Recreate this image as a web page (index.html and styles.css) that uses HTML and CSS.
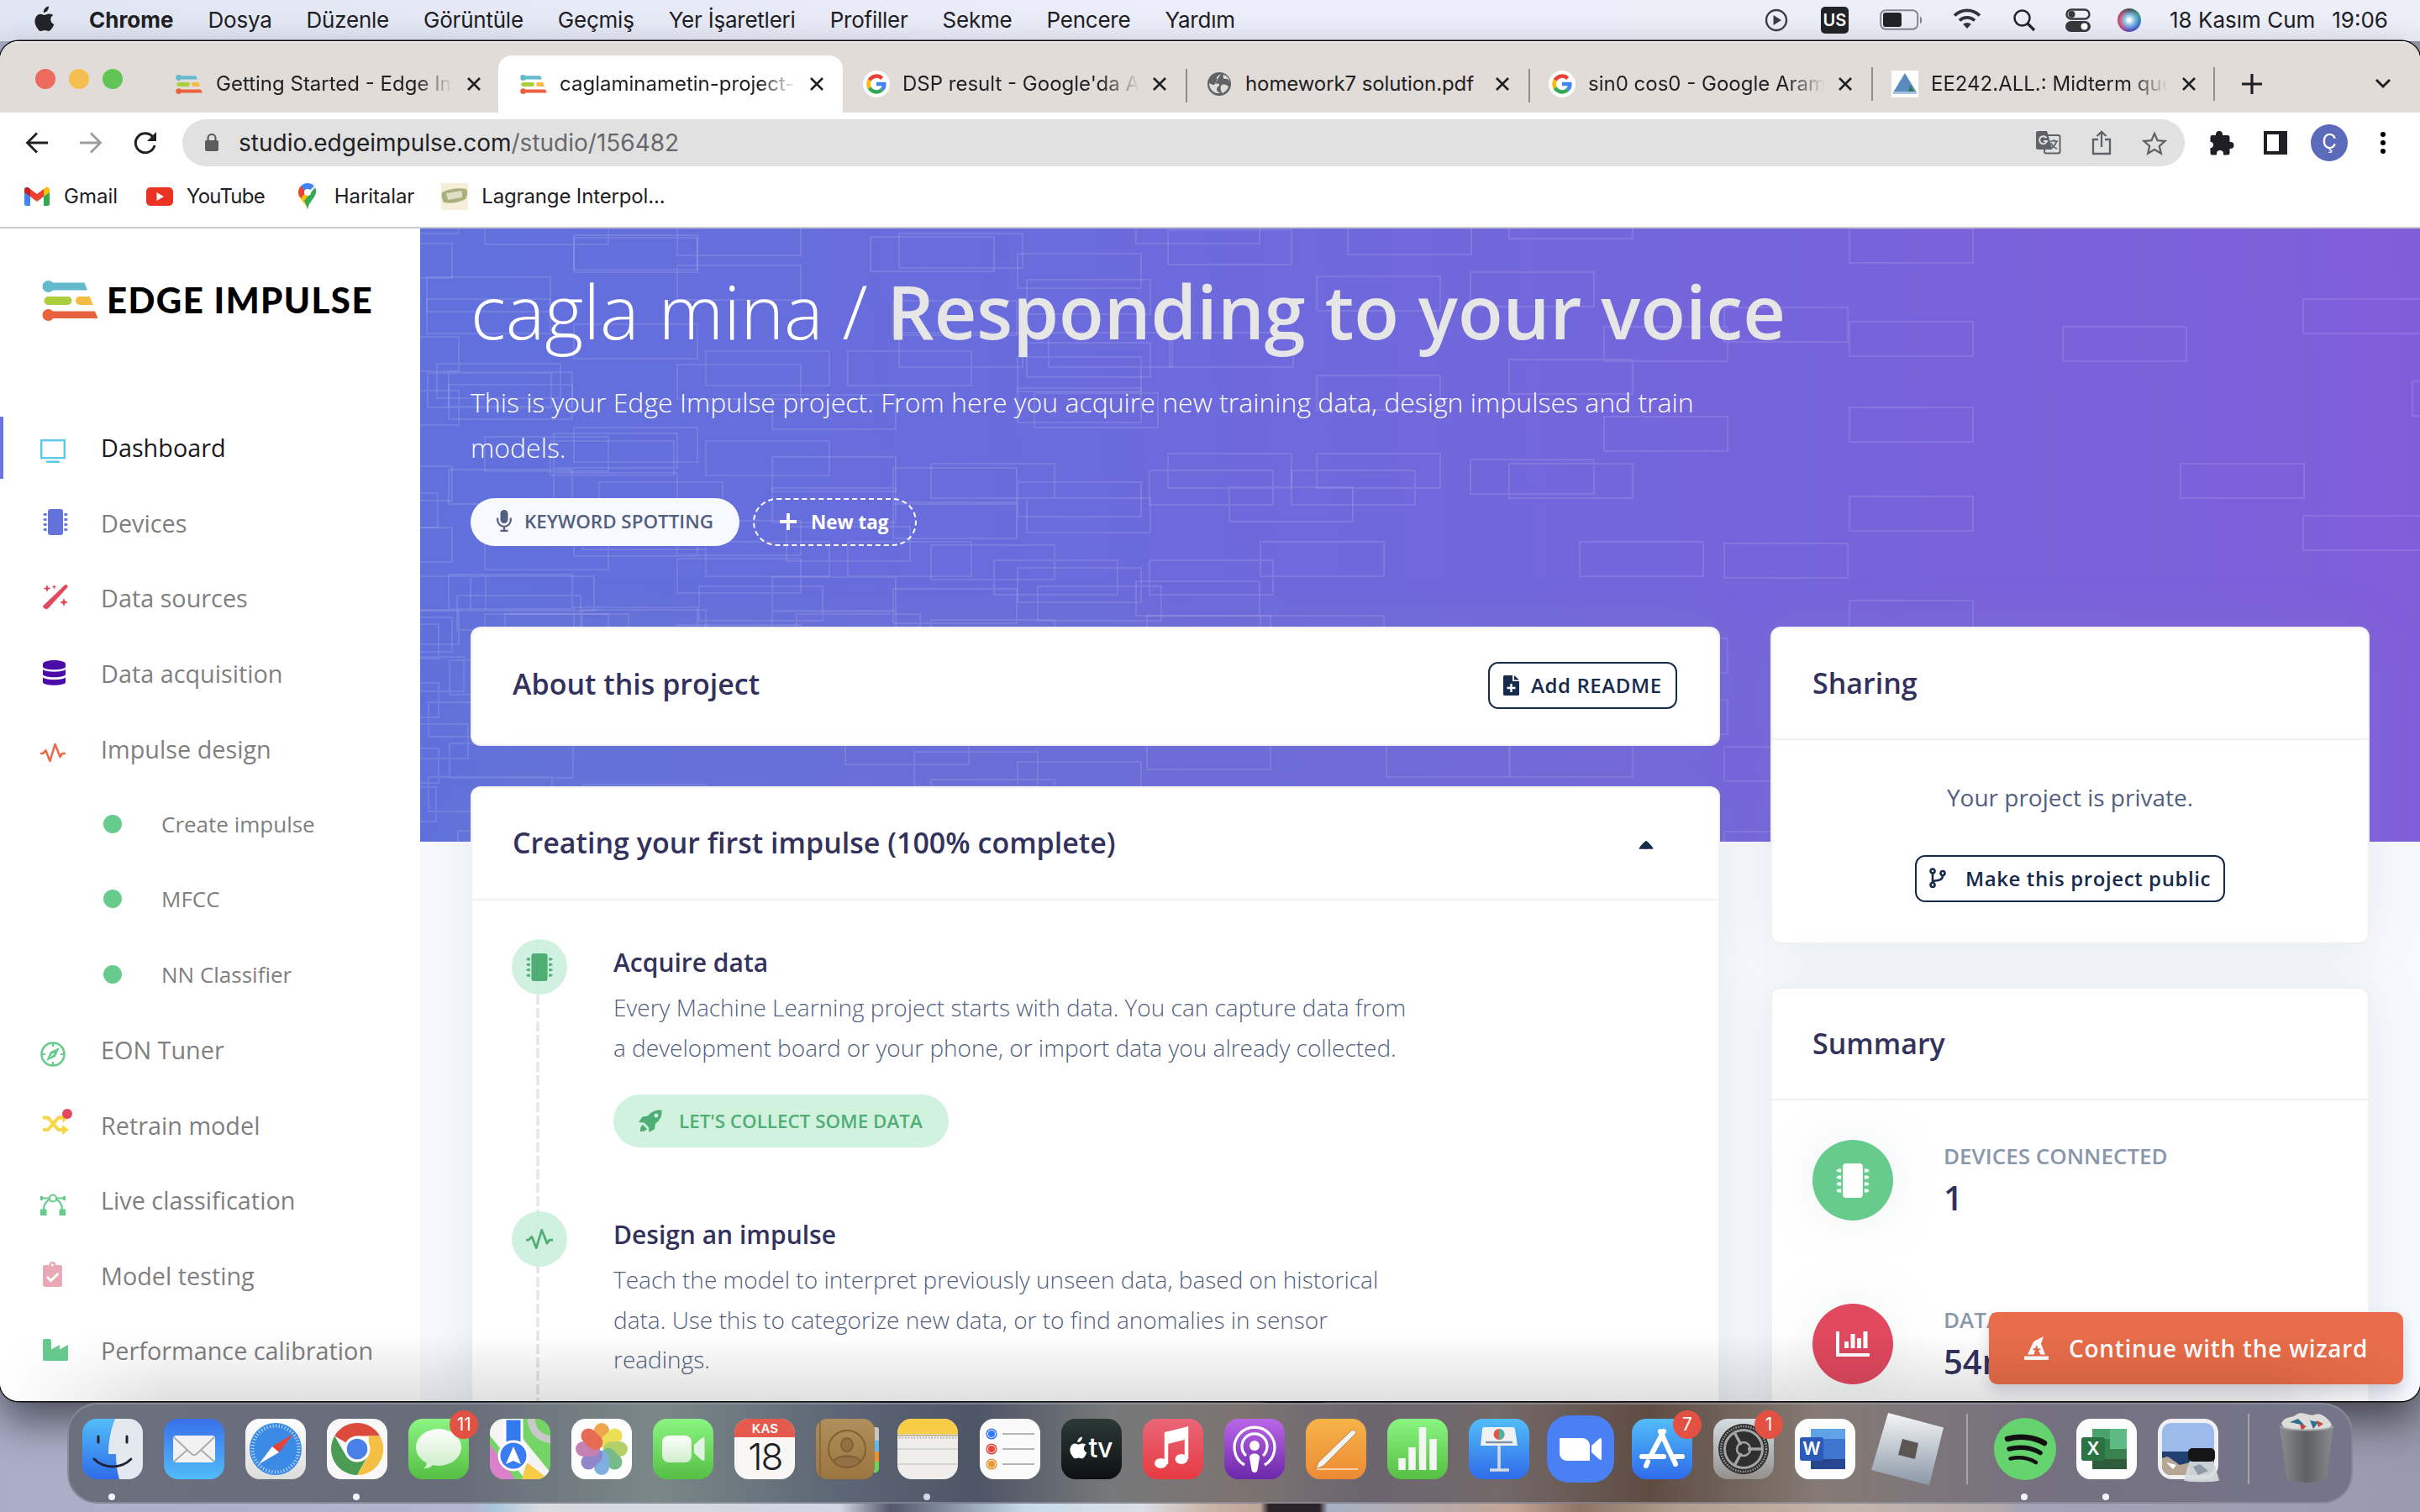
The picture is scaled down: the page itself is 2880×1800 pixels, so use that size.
FILE: index.html
```html
<!DOCTYPE html>
<html lang="tr">
<head>
<meta charset="utf-8">
<title>Edge Impulse – Dashboard</title>
<link rel="stylesheet" href="styles.css">
</head>
<body>
<svg class="defs" width="0" height="0">
  <defs>
    <symbol id="apple" viewBox="0 0 26 32"><path d="M18 .5c.2 2-.6 3.800-1.700 5.200S13.400 8 11.700 7.900c-.2-1.900.7-3.800 1.800-5S16.500.7 18 .5zM23.300 11c-1.900 1.200-3 2.900-3 5.200 0 2.700 1.600 4.800 4 5.700-.6 1.800-1.600 3.700-2.700 5.200-1.100 1.500-2.200 3-4 3-1.700 0-2.300-1-4.400-1s-2.800 1-4.400 1c-1.700.1-3-1.600-4.100-3.200C2 23.500.2 18.400 2.500 13.700c1.200-2.500 3.400-4 5.800-4 1.800 0 3.500 1.200 4.600 1.200s3.200-1.500 5.400-1.300c.9 0 3.500.4 5 1.400z"/></symbol>
    <symbol id="edge" viewBox="0 0 67 48"><circle cx="7.500" cy="7" r="7" fill="#62bacc"/><path d="M8 2.500h42.500L54 11.500H8z" fill="#62bacc"/><rect x="2.500" y="19" width="33" height="10" rx="5" fill="#abcf3c"/><path d="M45 19h12l3.500 10H45a5 5 0 0 1 0-10z" fill="#f5bb41"/><circle cx="7.500" cy="41" r="7" fill="#e9613d"/><path d="M8 36.500h55L66.500 45H8z" fill="#e9613d"/></symbol>
    <symbol id="close" viewBox="0 0 16 16"><path d="M1 1l14 14M15 1L1 15" stroke="#1f2023" stroke-width="2.600"/></symbol>
    <symbol id="google" viewBox="0 0 32 32"><circle cx="16" cy="16" r="16" fill="#fff"/><g fill="none" stroke-width="4.600"><path d="M7.700 11.500A9.500 9.500 0 0 1 22.700 9.300" stroke="#ea4335"/><path d="M7.700 20.500a9.500 9.500 0 0 1 0-9" stroke="#fbbc05"/><path d="M22.500 22.900A9.500 9.500 0 0 1 7.700 20.500" stroke="#34a853"/><path d="M16 16h9.300c.2 3-1 5.300-2.800 6.900" stroke="#4285f4"/></g></symbol>
    <symbol id="chip" viewBox="0 0 30 31"><rect x="6" y="0" width="18" height="31" rx="3"/><path d="M0 6.500l2-1.500h2.500v3H2zm0 6l2-1.500h2.500v3H2zm0 6L2 17h2.500v3H2zm0 6L2 23h2.500v3H2zM30 6.500L28 5h-2.500v3H28zm0 6L28 11h-2.500v3H28zm0 6L28 17h-2.500v3H28zm0 6L28 23h-2.500v3H28z"/></symbol>
    <symbol id="pulse" viewBox="0 0 30 24"><path d="M0 13h3l3.500-3.500L11.500 22 17.500 2l6 15 2.500-4h4" fill="none" stroke="currentColor" stroke-width="2.600" stroke-linejoin="round"/></symbol>
    <symbol id="box" viewBox="0 0 72 72"><rect width="72" height="72" rx="17"/></symbol>
    <linearGradient id="gSky" x2="0" y2="1"><stop stop-color="#52bdf8"/><stop offset="1" stop-color="#2f6bea"/></linearGradient>
    <linearGradient id="gMail" x2="0" y2="1"><stop stop-color="#3a70ea"/><stop offset="1" stop-color="#52bdf9"/></linearGradient>
    <linearGradient id="gGreen" x2="0" y2="1"><stop stop-color="#8af582"/><stop offset="1" stop-color="#56bf44"/></linearGradient>
    <linearGradient id="gWhite" x2="0" y2="1"><stop stop-color="#fff"/><stop offset="1" stop-color="#dcdcdc"/></linearGradient>
    <linearGradient id="gRed" x2="0" y2="1"><stop stop-color="#ea6678"/><stop offset="1" stop-color="#e73b42"/></linearGradient>
    <linearGradient id="gPurple" x2="0" y2="1"><stop stop-color="#bb66e8"/><stop offset="1" stop-color="#6c27aa"/></linearGradient>
    <linearGradient id="gOrange" x2="0" y2="1"><stop stop-color="#f5b448"/><stop offset="1" stop-color="#ee8a35"/></linearGradient>
    <linearGradient id="gTv" x2="0" y2="1"><stop stop-color="#2c3a36"/><stop offset="1" stop-color="#0d1012"/></linearGradient>
    <linearGradient id="gBrown" x2="0" y2="1"><stop stop-color="#b08e5b"/><stop offset="1" stop-color="#9c763f"/></linearGradient>
    <linearGradient id="gSteel" x2="0" y2="1"><stop stop-color="#f4f5f7"/><stop offset="1" stop-color="#8b98a6"/></linearGradient>
    <linearGradient id="gGear" x2="0" y2="1"><stop stop-color="#d4dde2"/><stop offset="1" stop-color="#94918e"/></linearGradient>
    <linearGradient id="gBubble" x2="0" y2="1"><stop stop-color="#fff"/><stop offset="1" stop-color="#cfeeca"/></linearGradient>
    <linearGradient id="gBin" x2="1" y2="0"><stop stop-color="#8b8d8e"/><stop offset=".5" stop-color="#5c6062"/><stop offset="1" stop-color="#8a8c8d"/></linearGradient>
  </defs>
</svg>

<header class="menubar">
  <svg class="apple" width="26" height="32" fill="#232427"><use href="#apple"/></svg>
  <nav class="menus">
    <b>Chrome</b><span>Dosya</span><span>Düzenle</span><span>Görüntüle</span><span>Geçmiş</span><span>Yer İşaretleri</span><span>Profiller</span><span>Sekme</span><span>Pencere</span><span>Yardım</span>
  </nav>
  <div class="status">
    <svg width="28" height="28" viewBox="0 0 28 28"><circle cx="14" cy="14" r="12" fill="none" stroke="#3c3d42" stroke-width="2.400"/><path d="M10.500 8v12L20 14z" fill="#3c3d42"/></svg>
    <span class="lang">US</span>
    <svg class="s-bat" width="52" height="26" viewBox="0 0 52 26"><rect x="1.200" y="1.200" width="44" height="22.600" rx="6" fill="none" stroke="#85878c" stroke-width="2"/><rect x="4" y="4" width="22" height="17" rx="3" fill="#222327"/><path d="M48 8.500c3 1.500 3 7 0 9z" fill="#85878c"/></svg>
    <svg class="s-wifi" width="34" height="26" viewBox="0 0 34 26"><g fill="none" stroke="#333438" stroke-width="3.800"><path d="M2 9.500a21.500 21.500 0 0 1 30 0"/><path d="M8 15.500a13 13 0 0 1 18 0"/></g><path d="M17 25l-4.800-5.200a7 7 0 0 1 9.600 0z" fill="#333438"/></svg>
    <svg class="s-find" width="28" height="28" viewBox="0 0 28 28"><circle cx="11.500" cy="11.500" r="9" fill="none" stroke="#222327" stroke-width="2.500"/><path d="M18 18l8 8" stroke="#222327" stroke-width="3.200"/></svg>
    <svg class="s-cc" width="30" height="28" viewBox="0 0 30 28"><rect x="1.500" y="1.500" width="27" height="11" rx="5.500" fill="none" stroke="#37383c" stroke-width="2.400"/><circle cx="7.500" cy="7" r="4" fill="#37383c"/><rect x="0" y="15" width="30" height="13" rx="6.500" fill="#37383c"/><circle cx="22.500" cy="21.500" r="4" fill="#fff"/></svg>
    <i class="siri"></i>
    <span class="date">18 Kasım Cum</span><span class="clock">19:06</span>
  </div>
</header>

<div class="window">
  <div class="tabs">
    <div class="lights"><i></i><i></i><i></i></div>
    <div class="tab t1"><svg class="fav" width="32" height="23"><use href="#edge"/></svg><span class="tt">Getting Started - Edge Impulse</span><svg class="x" width="16" height="16"><use href="#close"/></svg></div>
    <div class="tab on"><svg class="fav" width="32" height="23"><use href="#edge"/></svg><span class="tt">caglaminametin-project-1</span><svg class="x" width="16" height="16"><use href="#close"/></svg></div>
    <div class="tab"><svg class="fav" width="32" height="32"><use href="#google"/></svg><span class="tt">DSP result - Google'da Ara</span><svg class="x" width="16" height="16"><use href="#close"/></svg></div>
    <div class="tab sep"><svg class="fav" width="32" height="32" viewBox="0 0 32 32"><circle cx="16" cy="16" r="14" fill="#5f6368"/><path d="M18 4c-3 2-6 4-5 6 2 1 1 3-2 4-1 2 3 1 5 2 1 3-3 3-3 6s2 3 4 5h-3C7 26 4 20 4 15c5 3 8 2 7 0M21 5c-1 3 0 5 2 5 3-1 4 1 5 3 0-4-3-7-7-8zM19 17c3-1 6 0 8 2-1 4-4 6-7 8-3-3-3-8-1-10z" fill="#e2dcd8"/></svg><span class="tt full">homework7 solution.pdf</span><svg class="x" width="16" height="16"><use href="#close"/></svg></div>
    <div class="tab sep"><svg class="fav" width="32" height="32"><use href="#google"/></svg><span class="tt">sin0 cos0 - Google Arama</span><svg class="x" width="16" height="16"><use href="#close"/></svg></div>
    <div class="tab sep last"><svg class="fav" width="32" height="32" viewBox="0 0 32 32"><path d="M0 0h32v32H0z" fill="#fff"/><path d="M16 3l14 23H2z" fill="#5b8abf"/><path d="M22 17l6 10h-8z" fill="#2f7a4d"/><path d="M2 25h28v3H2z" fill="#a7c1df"/></svg><span class="tt">EE242.ALL.: Midterm question</span><svg class="x" width="16" height="16"><use href="#close"/></svg></div>
    <svg class="plus" width="26" height="26" viewBox="0 0 26 26"><path d="M13 1v24M1 13h24" stroke="#1f2023" stroke-width="3.200"/></svg>
    <svg class="chev" width="20" height="14" viewBox="0 0 20 14"><path d="M2 2l8 8 8-8" fill="none" stroke="#1f2023" stroke-width="3"/></svg>
  </div>

  <div class="toolbar">
    <svg class="back" width="28" height="26" viewBox="0 0 28 26"><path d="M27 13H3M14 1.500L2.500 13 14 24.500" fill="none" stroke="#1f2023" stroke-width="2.800"/></svg>
    <svg class="fwd" width="28" height="26" viewBox="0 0 28 26"><path d="M1 13h24M14 1.500L25.500 13 14 24.500" fill="none" stroke="#9d9d9d" stroke-width="2.800"/></svg>
    <svg class="reload" width="30" height="28" viewBox="0 0 30 28"><path d="M24.500 8A11.500 11.500 0 1 0 26 17" fill="none" stroke="#1f2023" stroke-width="3"/><path d="M28 1v11H17z" fill="#1f2023"/></svg>
    <div class="omnibox">
      <svg class="lock" width="18" height="22" viewBox="0 0 18 22"><rect x="1" y="8" width="16" height="13" rx="2" fill="#5c5d61"/><path d="M4.500 9V5.500a4.500 4.500 0 0 1 9 0V9" fill="none" stroke="#5c5d61" stroke-width="2.200"/></svg>
      <span class="url">studio.edgeimpulse.com<em>/studio/156482</em></span>
      <svg class="o-tr" width="30" height="28" viewBox="0 0 30 28"><rect x="10" y="5" width="18.500" height="21.500" rx="2" fill="none" stroke="#5f6368" stroke-width="2"/><path d="M2.500 0H13l6.500 22H2.500A2.500 2.500 0 0 1 0 19.500v-17A2.500 2.500 0 0 1 2.500 0z" fill="#5f6368"/><path d="M12.500 8.300A4.500 4.500 0 1 0 13 12H9" fill="none" stroke="#e1e1e1" stroke-width="2"/><path d="M17 12h9m-4.500-2v2m3 0c-1 4-3 6-5.500 8m-1-6c1 3 4 6 7 7" fill="none" stroke="#5f6368" stroke-width="1.700"/></svg>
      <svg class="o-sh" width="24" height="30" viewBox="0 0 24 30"><path d="M8 11H2v17h20V11h-6M12 20V2M6.500 7L12 1.800 17.500 7" fill="none" stroke="#5f6368" stroke-width="2.300"/></svg>
      <svg class="o-st" width="30" height="29" viewBox="0 0 30 29"><path d="M15 3l3.600 8.200 8.900.8-6.700 5.900 2 8.700-7.800-4.600-7.800 4.600 2-8.700L2.500 12l8.900-.8z" fill="none" stroke="#5f6368" stroke-width="2.300"/></svg>
    </div>
    <svg class="pz" width="30" height="30" viewBox="0 0 30 30"><path d="M8 6V5a4 4 0 0 1 8 0v1h6a2.500 2.500 0 0 1 2.500 2.500V14h1a4 4 0 0 1 0 8h-1v5a2.500 2.500 0 0 1-2.500 2.500h-5V28a4 4 0 0 0-8 0v1.500H4A2.500 2.500 0 0 1 1.500 27v-6H3a4 4 0 0 0 0-7H1.500V8.500A2.500 2.500 0 0 1 4 6z" fill="#1f2023"/></svg>
    <svg class="sp" width="28" height="28" viewBox="0 0 28 28"><path d="M0 0h28v28H0zM4 4v20h14V4z" fill="#1f2023" fill-rule="evenodd"/></svg>
    <span class="avatar">Ç</span>
    <svg class="dots" width="6" height="26" viewBox="0 0 6 26"><circle cx="3" cy="3" r="3"/><circle cx="3" cy="13" r="3"/><circle cx="3" cy="23" r="3"/></svg>
  </div>

  <div class="bookmarks">
    <svg width="30" height="22" viewBox="0 0 30 22"><path d="M0 3v17a2 2 0 0 0 2 2h5V8z" fill="#4285f4"/><path d="M30 3v17a2 2 0 0 1-2 2h-5V8z" fill="#34a853"/><path d="M23 2v9l7-5V3c0-3-3-4-5-2.500z" fill="#fbbc04"/><path d="M7 2v9l8 6 8-6V2l-8 6z" fill="#ea4335"/><path d="M0 3v3l7 5V2L5 .5C3-1 0 0 0 3z" fill="#c5221f"/></svg>
    <span class="k1">Gmail</span>
    <svg width="32" height="22" viewBox="0 0 32 22"><rect width="32" height="22" rx="5" fill="#ea3323"/><path d="M12.500 6v10l8.500-5z" fill="#fff"/></svg>
    <span class="k2">YouTube</span>
    <svg width="22" height="31" viewBox="0 0 22 31"><path d="M11 31C10 25 0 19 0 11A11 11 0 0 1 3 3.500L15 16z" fill="#fbbc04"/><path d="M0 11A11 11 0 0 1 3 3.500l7 6L3 18C1 16 0 13 0 11z" fill="#ea4335"/><path d="M3 3.500A11 11 0 0 1 19 3.500L10 12z" fill="#4285f4"/><path d="M20 5c5 10-7 15-9 26-1-3-2-7-4-10z" fill="#34a853"/><circle cx="11" cy="11" r="4" fill="#fff"/></svg>
    <span class="k3">Haritalar</span>
    <svg width="32" height="32" viewBox="0 0 32 32"><path d="M0 0h32v32H0z" fill="#f6eed9"/><path d="M1 11c8-4 20-6 29-4 2 4 1 8-1 12-8 4-18 6-26 4-2-4-3-8-2-12z" fill="#a9b07c"/><path d="M6 12l19-3v8L8 20z" fill="#dddfc6"/></svg>
    <span class="k4">Lagrange Interpol...</span>
  </div>

  <div class="page">
    <aside class="side">
      <div class="logo"><svg width="67" height="48"><use href="#edge"/></svg><span class="brand">EDGE IMPULSE</span></div>
      <nav>
        <a class="on"><svg class="cyan" width="30" height="29" viewBox="0 0 30 29"><rect x="1.200" y="1.200" width="27.600" height="21" fill="none" stroke="currentColor" stroke-width="2.400"/><path d="M8 26.700h14" stroke="currentColor" stroke-width="2.400" stroke-linecap="round"/></svg>Dashboard</a>
        <a><svg class="r indigo" width="30" height="31" fill="currentColor"><use href="#chip"/></svg>Devices</a>
        <a><svg class="r red" width="30" height="30" viewBox="0 0 30 30" fill="currentColor"><path d="M0 25.500L26 .5c2-1.500 4 .5 3.500 2.500L6 28.500c-2 2-6-1-6-3zM5 0l1.300 3.200L9.500 4.500 6.300 5.800 5 9 3.700 5.800.5 4.500l3.200-1.300zM13.500 0l.8 2 2 .8-2 .8-.8 2-.8-2-2-.8 2-.8zM25 16l1.400 3.600L30 21l-3.600 1.400L25 26l-1.400-3.600L20 21l3.600-1.400z"/></svg>Data sources</a>
        <a><svg class="r violet" width="27" height="30" viewBox="0 0 27 30" fill="currentColor"><path d="M0 4.500C0-1.500 27-1.500 27 4.500v3c0 5-27 5-27 0zM0 11c4 3.500 23 3.500 27 0v5.500c0 5-27 5-27 0zM0 20.500c4 3.500 23 3.500 27 0V26c0 5-27 5-27 0z"/></svg>Data acquisition</a>
        <a><svg class="coral" width="30" height="24"><use href="#pulse"/></svg>Impulse design</a>
        <a class="sub"><i></i>Create impulse</a>
        <a class="sub"><i></i>MFCC</a>
        <a class="sub"><i></i>NN Classifier</a>
        <a><svg class="green" width="30" height="30" viewBox="0 0 30 30"><circle cx="15" cy="15" r="13.500" fill="none" stroke="currentColor" stroke-width="2.600"/><path d="M15 2v4M15 24v4M2 15h4M24 15h4" stroke="currentColor" stroke-width="2"/><path d="M23 7l-5 11-11 5 5-11zM15 13.500l-4 5.500 5.500-4z" fill="currentColor" fill-rule="evenodd"/></svg>EON Tuner</a>
        <a><svg class="r sh yellow" width="36" height="32" viewBox="0 0 36 32"><path d="M0 10.500h6L18.500 25H26M0 25h6L18.500 10.500H26" fill="none" stroke="currentColor" stroke-width="4.200"/><path d="M23 4.500l8 6-8 6zM23 19l8 6-8 6z" fill="currentColor"/><circle cx="29" cy="6" r="6" fill="#e5475f"/></svg>Retrain model</a>
        <a><svg class="green" width="30" height="26" viewBox="0 0 30 26"><path d="M4 19C4 12 8 7 14 6.500M26 19c0-7-4-12-10-12.500M1 5.500h28" fill="none" stroke="currentColor" stroke-width="2.200"/><circle cx="15" cy="5.500" r="4" fill="#fff" stroke="currentColor" stroke-width="2"/><path d="M0 18.500h7.500V26H0zM22.500 18.500H30V26h-7.500zM0 3h3v5H0zM27 3h3v5h-3z" fill="currentColor"/></svg>Live classification</a>
        <a><svg class="r pink" width="23" height="30" viewBox="0 0 23 30"><path d="M2.500 4h5a4 4 0 0 1 8 0h5A2.500 2.500 0 0 1 23 6.500v21a2.500 2.500 0 0 1-2.500 2.500h-18A2.500 2.500 0 0 1 0 27.500v-21A2.500 2.500 0 0 1 2.500 4z" fill="currentColor"/><path d="M5 18l4.500 4.500L18.500 14" fill="none" stroke="#fff" stroke-width="3"/><circle cx="11.500" cy="4" r="1.400" fill="#fff"/></svg>Model testing</a>
        <a><svg class="r green" width="30" height="26" viewBox="0 0 30 26"><path d="M0 2a2 2 0 0 1 2-2h6a2 2 0 0 1 2 2v10.500L20 7v5.500L30 7v17a2 2 0 0 1-2 2H2a2 2 0 0 1-2-2z" fill="currentColor"/></svg>Performance calibration</a>
      </nav>
    </aside>

    <main>
      <svg class="boxes" width="2380" height="730" viewBox="0 0 2380 730">
        <path d="M-101-35h147v41h-147zM8 58h147v41H8zM-101 129h147v41h-147zM183 8h147v41H183zM306 44h147v41H306zM536 10h147v41H536zM711 30h147v41H711zM852-23h147v41H852zM1104-10h147v41h-147zM183 114h147v41H183zM340 146h147v41H340zM509 146h147v41H509zM570 124h147v41H570zM722 136h147v41H722zM892 124h147v41H892zM20 161h147v41H20zM34 186h147v41H34zM419 198h147v41H419zM711 190h147v41H711zM183 237h147v41H183zM77 248h147v41H77zM340 253h147v41H340zM-109 283h147v41h-147zM159 291h147v41H159zM563 285h147v41H563zM419 309h147v41H419zM711 302h147v41H711zM890 268h147v41H890zM868 288h147v41H868zM963 308h147v41H963zM-126 315h147v41h-147zM77 365h147v41H77zM193 341h147v41H193zM436 355h147v41H436zM340 373h147v41H340zM608 377h147v41H608zM683 395h147v41H683zM852 420h147v41H852zM563 429h147v41H563zM332 426h147v41H332zM34 412h147v41H34zM44 437h147v41H44zM193 454h147v41H193zM448 459h147v41H448zM77 459h147v41H77zM-101 454h147v41h-147zM608 466h147v41H608zM1000 461h147v41h-147z"/>
        <path d="M-109 18h147v41h-147zM8 84h147v41H8zM77-22h147v41H77zM183 11h147v41H183zM306-9h147v41H306zM570 6h147v41H570zM722 61h147v41H722zM890 2h147v41H890zM1067 57h147v41h-147zM563 86h147v41H563zM306 162h147v41H306zM711 153h147v41H711zM748 124h147v41H748zM1067 175h147v41h-147zM34 171h147v41H34zM-101 193h147v41h-147zM9 172h147v41H9zM731 196h147v41H731zM159 244h147v41H159zM155 253h147v41H155zM419 272h147v41H419zM34 287h147v41H34zM213 302h147v41H213zM608 280h147v41H608zM722 321h147v41H722zM563 328h147v41H563zM1067 268h147v41h-147zM1037 288h147v41h-147zM-109 356h147v41h-147zM183 349h147v41H183zM306 348h147v41H306zM509 373h147v41H509zM711 404h147v41H711zM868 395h147v41H868zM1000 373h147v41h-147zM735 426h147v41H735zM306 393h147v41H306zM419 415h147v41H419zM60 414h147v41H60zM-69 414h147v41h-147zM183 451h147v41H183zM419 455h147v41H419zM101 459h147v41H101zM-109 463h147v41h-147zM306 472h147v41H306zM865 461h147v41H865z"/>
        <path d="M1296-29h147v41h-147zM1701 0h147v41h-147zM1250 52h147v41h-147zM1701 111h147v41h-147zM1955 117h147v41h-147zM2241 84h147v41h-147zM1552 94h147v41h-147zM1409 117h147v41h-147zM1296 156h147v41h-147zM1409 224h147v41h-147zM1701 213h147v41h-147zM2095 280h147v41h-147zM1250 275h147v41h-147zM1296 280h147v41h-147zM1701 319h147v41h-147zM2241 342h147v41h-147zM2371 182h147v41h-147zM1380 373h147v41h-147zM1552 375h147v41h-147zM1701 443h147v41h-147zM1409 488h147v41h-147zM1409 561h147v41h-147zM1552 617h147v41h-147zM1296 612h147v41h-147zM1150 612h147v41h-147zM1552 718h147v41h-147zM506 597h147v41H506zM588 623h147v41H588zM711 635h147v41H711zM865 603h147v41H865zM35 514h147v41H35zM10 564h147v41H10zM35 613h147v41H35zM10 653h147v41H10zM-125 471h147v41h-147zM-125 541h147v41h-147zM-125 619h147v41h-147zM-95 510h147v41h-147zM-128 665h147v41h-147zM608 656h147v41H608zM194 662h147v41H194zM45 717h147v41H45zM-90 590h147v41h-147z"/>
      </svg>
      <div class="hero">
        <h1><span class="own">cagla mina / </span><b class="proj">Responding to your voice</b></h1>
        <p>This is your Edge Impulse project. From here you acquire new training data, design impulses and train<br>models.</p>
        <div class="tags">
          <span class="tag"><svg width="18" height="26" viewBox="0 0 18 26"><rect x="4.500" y="0" width="9" height="16" rx="4.500" fill="#525f7f"/><path d="M1.200 9.500v2.500a7.800 7.800 0 0 0 15.600 0V9.500M9 20v4M4.500 24.800h9" fill="none" stroke="#525f7f" stroke-width="2.200"/></svg>KEYWORD SPOTTING</span>
          <span class="tag new"><svg width="20" height="20" viewBox="0 0 20 20"><path d="M10 0v20M0 10h20" stroke="#fff" stroke-width="3.800"/></svg>New tag</span>
        </div>
      </div>
      <div class="cols">
        <div class="left">
          <section class="card about"><h2>About this project</h2><span class="btn readme"><svg width="19" height="24" viewBox="0 0 19 24"><path d="M1.500 0H11v7h8v15.500a1.500 1.500 0 0 1-1.500 1.500h-16A1.500 1.500 0 0 1 0 22.500v-21A1.500 1.500 0 0 1 1.500 0zM13 0l6 5.500h-6z" fill="#172b4d"/><path d="M9.500 10v10M4.500 15h10" stroke="#fff" stroke-width="2.400"/></svg>Add README</span></section>
          <section class="card steps">
            <header><h2>Creating your first impulse (100% complete)</h2><svg class="caret" width="18" height="10" viewBox="0 0 18 10"><path d="M9 0c1 0 9 8 8.500 9.500C17 10 1 10 .5 9.500 0 8 8 0 9 0z" fill="#172b4d"/></svg></header>
            <div class="timeline">
              <article><i class="pin"><svg width="32" height="33" fill="#4fae74"><use href="#chip"/></svg></i><div class="txt">
                <h3>Acquire data</h3>
                <p>Every Machine Learning project starts with data. You can capture data from<br>a development board or your phone, or import data you already collected.</p>
                <span class="pill"><svg width="28" height="27" viewBox="0 0 28 27" fill="#4fae74"><path d="M27.500.5c.6 7-2 12-7.500 16l-1 6.500-6.500 4-.5-6-5.500-5.500L0 15l4.500-6.500 6.500-1C15 2 20 0 27.500.5zM21 4.500a2.500 2.500 0 1 0 0 5 2.500 2.500 0 0 0 0-5z" fill-rule="evenodd"/><path d="M5 18l5 5c-2 3-6 3-8 3 0-3 0-6 3-8z"/></svg>LET'S COLLECT SOME DATA</span>
              </div></article>
              <article><i class="pin"><svg class="jade" width="32" height="26"><use href="#pulse"/></svg></i><div class="txt">
                <h3>Design an impulse</h3>
                <p>Teach the model to interpret previously unseen data, based on historical<br>data. Use this to categorize new data, or to find anomalies in sensor<br>readings.</p>
              </div></article>
            </div>
          </section>
        </div>
        <div class="right">
          <section class="card share"><header><h2>Sharing</h2></header><p class="priv">Your project is private.</p><span class="btn public"><svg width="20" height="25" viewBox="0 0 20 25"><g fill="none" stroke="#172b4d" stroke-width="2.600"><circle cx="4" cy="4" r="2.500"/><circle cx="4" cy="20.500" r="2.500"/><circle cx="16" cy="6.500" r="2.500"/><path d="M4 6.500V18M16 9c0 6-5 6-12 7"/></g></svg>Make this project public</span></section>
          <section class="card sum"><header><h2>Summary</h2></header>
            <div class="stat"><i><svg width="40" height="41" fill="#fff"><use href="#chip"/></svg></i><div><small>DEVICES CONNECTED</small><strong>1</strong></div></div>
            <div class="stat"><i class="crimson"><svg width="40" height="30" viewBox="0 0 40 30"><path d="M2 0v28h38" fill="none" stroke="#fff" stroke-width="4"/><path d="M12.500 12v8M20 3v17M27.500 8v12M35 0v20" stroke="#fff" stroke-width="5"/></svg></i><div><small>DATA COLLECTED</small><strong>54m 21s</strong></div></div>
          </section>
        </div>
      </div>
      <a class="wizard"><svg width="29" height="28" viewBox="0 0 29 28" fill="#fff"><path d="M4 21.500L10 8.500l2-3L23 0l-3 8.500 5 13h-5.500l-2.500-4.500 3-2-4-1-1-4-2 4-3.500 1 3.500 2-1.500 4.500zM0 23.500h29V28H0z"/></svg>Continue with the wizard</a>
    </main>
    <div class="fade"></div>
  </div>
</div>

<footer class="dock">
  <div class="app run"><svg viewBox="0 0 72 72"><clipPath id="cf"><rect width="72" height="72" rx="17"/></clipPath><g clip-path="url(#cf)"><path d="M0 0h72v72H0z" fill="url(#gSky)"/><path d="M39 0c-5 12-8 27-8 42h9c0 10 1 20 4 30h28V0z" fill="#e4e8ef"/></g><path d="M19 21v7M53 21v7" stroke="#223" stroke-width="3" stroke-linecap="round"/><path d="M14 48c12 12 32 12 44 0" fill="none" stroke="#223" stroke-width="2.800" stroke-linecap="round"/></svg></div>
  <div class="app"><svg viewBox="0 0 72 72"><use href="#box" fill="url(#gMail)"/><rect x="11" y="20" width="50" height="32" rx="4" fill="#f2f2f2"/><path d="M12 22l20 19c3 3 5 3 8 0l20-19M12 51l16-14M60 51L44 37" fill="none" stroke="#aaa" stroke-width="1.800"/></svg></div>
  <div class="app"><svg viewBox="0 0 72 72"><use href="#box" fill="url(#gWhite)"/><circle cx="36" cy="36" r="31" fill="#3a8ae6"/><circle cx="36" cy="36" r="27.500" fill="none" stroke="#cfe4fb" stroke-width="4" stroke-dasharray="1 2.600"/><path d="M57 18L40 40l-8-7z" fill="#e8433a"/><path d="M16 54l16-21 8 7z" fill="#fff"/></svg></div>
  <div class="app run"><svg viewBox="0 0 72 72"><use href="#box" fill="#f8f8f8"/><path d="M36 36L9.200 20.500A31 31 0 0 1 63 20.500H36z" fill="#db4a3b"/><path d="M9.200 20.500A31 31 0 0 0 36 67l13-23.500-26.500 0z" fill="#4a9c54"/><path d="M63 20.500A31 31 0 0 1 36 67l13.400-23.300L50 20.500z" fill="#f3c044"/><circle cx="36" cy="36" r="15.500" fill="#fff"/><circle cx="36" cy="36" r="12.300" fill="#4a7fe8"/></svg></div>
  <div class="app"><svg viewBox="0 0 72 72"><use href="#box" fill="url(#gGreen)"/><path d="M22 50c0 5-1 7-4 9 6 0 10-2 13-6z" fill="#d7f1d3"/><ellipse cx="36" cy="34" rx="27" ry="22" fill="url(#gBubble)"/></svg><b class="badge">11</b></div>
  <div class="app"><svg viewBox="0 0 72 72"><clipPath id="cm"><rect width="72" height="72" rx="17"/></clipPath><g clip-path="url(#cm)"><path d="M0 0h72v72H0z" fill="#74d566"/><path d="M0 30l30 42H0z" fill="#dd80cc"/><path d="M0 0v20l42 52h30V64L20 0z" fill="#f4f4f4"/><path d="M38 72L44 52l26 20z" fill="#f6cb45"/><path d="M18 0h20v42H18z" fill="#3478f0" stroke="#fff" stroke-width="3"/><path d="M49-2c0 16 10 26 26 27" fill="none" stroke="#c8c8c8" stroke-width="9"/></g><circle cx="28" cy="44" r="17" fill="#3a7cf2" stroke="#fff" stroke-width="3"/><path d="M28 33l9 21-9-4-9 4z" fill="#fff"/></svg></div>
  <div class="app"><svg viewBox="0 0 72 72"><use href="#box" fill="#fdfdfd"/><g opacity=".88"><rect x="27" y="5" width="18" height="29" rx="9" fill="#f09a38"/><rect x="27" y="5" width="18" height="29" rx="9" fill="#eadb3f" transform="rotate(45 36 36)"/><rect x="27" y="5" width="18" height="29" rx="9" fill="#a9cc54" transform="rotate(90 36 36)"/><rect x="27" y="5" width="18" height="29" rx="9" fill="#66b37c" transform="rotate(135 36 36)"/><rect x="27" y="5" width="18" height="29" rx="9" fill="#6ea5dc" transform="rotate(180 36 36)"/><rect x="27" y="5" width="18" height="29" rx="9" fill="#8276c4" transform="rotate(225 36 36)"/><rect x="27" y="5" width="18" height="29" rx="9" fill="#bd71a8" transform="rotate(270 36 36)"/><rect x="27" y="5" width="18" height="29" rx="9" fill="#e4573d" transform="rotate(315 36 36)"/></g></svg></div>
  <div class="app"><svg viewBox="0 0 72 72"><use href="#box" fill="url(#gGreen)"/><rect x="11" y="20" width="35" height="32" rx="8" fill="url(#gBubble)"/><path d="M49 31l9-8c2-1.500 3.500-1 3.500 1v24c0 2-1.500 2.500-3.500 1l-9-8z" fill="#e3f3e3"/></svg></div>
  <div class="app cal"><svg viewBox="0 0 72 72"><use href="#box" fill="#f8f7f5"/><path d="M0 22V17A17 17 0 0 1 17 0h38a17 17 0 0 1 17 17v5z" fill="#e65a4d"/></svg><b>KAS</b><span>18</span></div>
  <div class="app"><svg viewBox="0 0 72 72"><path d="M60 10h12a3 3 0 0 1 3 3v13H60z" fill="#c9c7c2"/><path d="M60 26h15v13H60z" fill="#64b5e8"/><path d="M60 39h15v12H60z" fill="#ea9430"/><path d="M60 51h15v8c0 3-2 5-5 5H60z" fill="#6fd362"/><rect width="70" height="72" rx="14" fill="url(#gBrown)"/><path d="M5 3v66" stroke="#876533" stroke-width="1.500"/><g fill="#947044" stroke="#7e5e33" stroke-width="1.800"><circle cx="37" cy="36" r="22" fill="none"/><ellipse cx="37" cy="31" rx="7" ry="8"/><path d="M21 51c4-9 28-9 32 0-8 9-24 9-32 0z"/></g></svg></div>
  <div class="app run dim"><svg viewBox="0 0 72 72"><use href="#box" fill="#efeeec"/><path d="M0 18v-1A17 17 0 0 1 17 0h38a17 17 0 0 1 17 17v1z" fill="#f8cd46"/><path d="M0 19.500h72" stroke="#b9a36a" stroke-width="1.500"/><path d="M2 22.500h68" stroke="#aaa" stroke-width="2" stroke-dasharray="1.500 2"/><path d="M0 36h72M0 54h72" stroke="#cdcdcb" stroke-width="1.500"/></svg></div>
  <div class="app"><svg viewBox="0 0 72 72"><use href="#box" fill="#fbfafa"/><g fill="none" stroke-width="1.500"><circle cx="14" cy="18" r="5.800" stroke="#3478f6"/><circle cx="14" cy="36" r="5.800" stroke="#e5473d"/><circle cx="14" cy="54" r="5.800" stroke="#e99532"/></g><circle cx="14" cy="18" r="4" fill="#3478f6"/><circle cx="14" cy="36" r="4" fill="#e5473d"/><circle cx="14" cy="54" r="4" fill="#e99532"/><path d="M27 18h38M27 36h38M27 54h38" stroke="#b4b4b6" stroke-width="2"/></svg></div>
  <div class="app tv"><svg viewBox="0 0 72 72"><use href="#box" fill="url(#gTv)"/><use href="#apple" x="9" y="21" width="23" height="28" fill="#fff"/></svg><span>tv</span></div>
  <div class="app"><svg viewBox="0 0 72 72"><use href="#box" fill="url(#gRed)"/><path d="M28 54V18l24-6v36M28 28l24-6" fill="none" stroke="#fff" stroke-width="4.500"/><path d="M26 16l26-5v12l-26 5z" fill="#fff"/><ellipse cx="21.500" cy="53" rx="7.500" ry="6" fill="#fff"/><ellipse cx="46" cy="48" rx="7.500" ry="6" fill="#fff"/></svg></div>
  <div class="app"><svg viewBox="0 0 72 72"><use href="#box" fill="url(#gPurple)"/><g fill="none" stroke="#fff" stroke-width="3.200"><path d="M24 55a24 24 0 1 1 24 0"/><path d="M26 44a15 15 0 1 1 20 0"/></g><circle cx="36" cy="32" r="6" fill="#fff"/><path d="M30 46c0-6 12-6 12 0l-2.500 15c-.5 4-6.500 4-7 0z" fill="#fff"/></svg></div>
  <div class="app"><svg viewBox="0 0 72 72"><use href="#box" fill="url(#gOrange)"/><path d="M12 60h50" stroke="#f9cf9a" stroke-width="2"/><path d="M53 15c3-3 8-1 6 3L21 56l-9 4 3-8z" fill="#f4f1ee" stroke="#b98a55" stroke-width="1"/></svg></div>
  <div class="app"><svg viewBox="0 0 72 72"><use href="#box" fill="url(#gGreen)"/><path d="M17.500 47v14M29.500 34v27M42 10v51M54.500 24v37" stroke="#f3f6f3" stroke-width="8.500"/></svg></div>
  <div class="app"><svg viewBox="0 0 72 72"><use href="#box" fill="url(#gSky)"/><path d="M19 10h33c2 0 3 1 3 3l3 19H14l2-19c0-2 1-3 3-3z" fill="#f0f1f3"/><path d="M20 28h32" stroke="#7d93a8" stroke-width="2.500"/><circle cx="36" cy="18.500" r="6.500" fill="#e2574c"/><path d="M36 12a6.500 6.500 0 0 1 0 13z" fill="#4fb3a0"/><path d="M36 32v28M25 61h23" stroke="#d5dbe2" stroke-width="3.500"/></svg></div>
  <div class="app zoom"><svg viewBox="0 0 80 80"><rect width="80" height="80" rx="26" fill="#4a80f3"/><path d="M15 27h27c5 0 9 4 9 9v18H24c-5 0-9-4-9-9zM53 36l9-8c2-2 3-1 3 1v22c0 2-1 3-3 1l-9-8z" fill="#fff"/></svg></div>
  <div class="app"><svg viewBox="0 0 72 72"><use href="#box" fill="url(#gSky)"/><path d="M34 15l18 39M38 15L22 45M12 45h26M48 45h12M19 51l-2 5" stroke="#fff" stroke-width="6" stroke-linecap="round"/></svg><b class="badge">7</b></div>
  <div class="app"><svg viewBox="0 0 72 72"><use href="#box" fill="url(#gGear)"/><circle cx="36" cy="36" r="30" fill="#2f2f30"/><circle cx="36" cy="36" r="27" fill="none" stroke="#9b9b9b" stroke-width="2.500" stroke-dasharray="1.500 1.500"/><g fill="none" stroke="#a2a4a6"><circle cx="36" cy="36" r="22.500" stroke-width="3"/><circle cx="36" cy="36" r="8" stroke-width="2.500"/><path d="M41 36h17M33 31L25 16M33 41l-8 15" stroke-width="3.500"/></g></svg><b class="badge">1</b></div>
  <div class="app off"><svg viewBox="0 0 72 72"><use href="#box" fill="#fdfdfd"/><rect x="19" y="12" width="41" height="48" rx="3" fill="#3f74cf"/><path d="M19 12h41v12H19z" fill="#5fa2e6"/><path d="M19 48h41v12H19z" fill="#26468f"/><rect x="6" y="22" width="28" height="28" rx="3" fill="#2b5bb8"/></svg><span>W</span></div>
  <div class="app rb"><svg viewBox="0 0 86 86"><path d="M20 0l66 17.500L69 86 0 68z" fill="url(#gSteel)"/><path d="M37 31l19 5-4 19-20-5z" fill="#5b5654"/></svg></div>
  <i class="bar b1"></i>
  <div class="app run"><svg viewBox="0 0 72 72"><circle cx="36" cy="36" r="37" fill="#65d46e"/><g fill="none" stroke="#111" stroke-linecap="round"><path d="M15 24c15-4 32-2.500 44 5" stroke-width="6.500"/><path d="M17 36c12-3.500 26-2 37 4.500" stroke-width="5.500"/><path d="M18.500 47.500c11-2.500 21-1 30.500 4.500" stroke-width="4.500"/></g></svg></div>
  <div class="app off run"><svg viewBox="0 0 72 72"><use href="#box" fill="#fdfdfd"/><rect x="19" y="12" width="41" height="48" rx="3" fill="#388250"/><path d="M40 12h20v24H40z" fill="#5cbb82"/><path d="M19 12h21v12H19z" fill="#4aa36c"/><path d="M19 48h41v12H19z" fill="#2f5c3b"/><rect x="6" y="22" width="28" height="28" rx="3" fill="#2b7343"/></svg><span>X</span></div>
  <div class="app"><svg viewBox="0 0 72 72"><clipPath id="cp"><rect x="5" y="5" width="62" height="62" rx="11"/></clipPath><use href="#box" fill="#f0f0f2"/><g clip-path="url(#cp)"><path d="M0 0h72v40H0z" fill="#9cbbec"/><path d="M0 39h72v33H0z" fill="#223f74"/><path d="M0 48l12-3 14 10 12-3v20H0z" fill="#b6a795"/><path d="M10 52l12 3-4 5z" fill="#fff"/></g><path d="M38 50h28l7 23c0 3-42 3-42 0z" fill="#d8dbdd" opacity=".93"/><path d="M42 57l8-3 10 8-12 5z" fill="#8d99a4"/><rect x="36" y="35" width="32" height="16" rx="5" fill="#161616"/></svg></div>
  <i class="bar b2"></i>
  <div class="app bin"><svg viewBox="0 0 64 84"><path d="M2 12C6 2 14 6 20 1s16 3 22 0 16 4 20 12l-5 8H8z" fill="#dcdcda"/><path d="M12 10l10-4 8 8zM36 8l10 2-6 8z" fill="#2d6f8f"/><path d="M24 12l8 3-6 5zM44 8l8 4-6 4z" fill="#c0483b"/><path d="M0 15c10 6 54 6 64 0l-8 60c-2 9-46 9-48 0z" fill="url(#gBin)" opacity=".94"/><path d="M0 15c10 6 54 6 64 0" fill="none" stroke="#a5a7a8" stroke-width="2"/></svg></div>
</footer>
</body>
</html>
```
FILE: styles.css
```css
* { box-sizing: border-box; }
body {
  margin: 0; width: 2880px; height: 1800px; overflow: hidden;
  display: flex; flex-direction: column;
  font-family: "Inter", "Liberation Sans", sans-serif; color: #1f2023;
  background: linear-gradient(90deg, #a9adc6 0, #b4b6cf 560px, #a9c7dd 590px, #d9dbe2 640px, #cfd6e0 1000px, #54586a 1060px, #c6dcea 1220px, #dcdfe6 1360px, #c9b3a6 1440px, #bda598 1500px, #2a2327 1510px, #2a2327 1570px, #a7b2c4 1580px, #c3a596 1800px, #8d7565 1880px, #b29e90 2000px, #c5b6ac 2200px, #b3a9ac 2380px, #a5a3b7 2400px, #9a99ad 2880px);
}
svg { display: block; flex: none; }
.defs { position: absolute; }

.menubar { height: 49px; flex: none; display: flex; align-items: center; padding: 0 38px 2px 27px; font-size: 26px; background: linear-gradient(90deg, #e1e6f4, #eceef9 50%, #eceef8); }
.apple { margin: -2px 40px 0 13px; }
.menus { display: flex; gap: 41px; white-space: nowrap; }
.menus span { letter-spacing: -.23px; }
.status { margin-left: auto; display: flex; align-items: center; white-space: nowrap; }
.lang { width: 33px; height: 32px; margin: 0 37px 0 39px; border-radius: 5px; background: #222327; color: #fff; font-size: 20px; font-weight: 600; line-height: 32px; text-align: center; }
.s-wifi { margin-left: 35px; margin-top: -3px; }
.s-find { margin-left: 37px; }
.s-cc { margin-left: 35px; }
.siri { width: 28px; height: 28px; margin: 0 34px 0 32px; border-radius: 50%; background: radial-gradient(circle, #fff 8%, #8cc5ea 30%, transparent 62%), conic-gradient(#46505c, #3f9f8c, #3a6fd0, #5d4ac0, #d84a7c, #c24a6a, #46505c); }
.clock { margin-left: 20px; }

.window { height: 1619px; flex: none; overflow: hidden; border-radius: 22px; background: #fff; box-shadow: 0 0 0 1.500px #0b0b0d, 0 24px 50px rgba(0,0,0,.55); display: flex; flex-direction: column; }
.tabs { height: 85px; flex: none; display: flex; align-items: center; padding-top: 15px; background: #e2dcd8; border-top: 2px solid #ece8e5; font-size: 24px; }
.lights { display: flex; gap: 16px; padding: 0 63px 13px 42px; }
.lights i { width: 24px; height: 24px; border-radius: 50%; background: #ec6a5e; }
.lights i + i { background: #f4bf4f; }
.lights i + i + i { background: #61c454; }
.tab { height: 68px; width: 408px; display: flex; align-items: center; padding: 0 23px 0 24px; position: relative; }
.tab.t1 { width: 384px; padding-left: 0; padding-right: 21px; }
.tab.on { width: 410px; background: #fff; border-radius: 16px 16px 0 0; padding-left: 26px; }
.tab.sep::before { content: ""; position: absolute; left: 0; top: 16px; width: 2px; height: 40px; background: #918d8a; }
.tab.last { width: 409px; border-right: 2px solid #918d8a; height: 40px; padding-right: 21px; }
.tab.last::before { top: 0; }
.tt { margin-left: 15px; width: 282px; flex: none; overflow: hidden; white-space: nowrap; line-height: 32px; margin-top: -1px; -webkit-mask: linear-gradient(90deg, #000 84%, transparent); mask: linear-gradient(90deg, #000 84%, transparent); }
.tt.full { -webkit-mask: none; mask: none; letter-spacing: -.1px; }
.t1 .tt { margin-left: 16px; }
.x { margin-left: auto; }
.plus { margin-left: 31px; }
.chev { margin-left: auto; margin-right: 34px; }

.toolbar { height: 72px; flex: none; display: flex; align-items: center; }
.back { margin-left: 30px; }
.fwd { margin-left: 36px; }
.reload { margin-left: 36px; }
.omnibox { width: 2383px; height: 56px; margin-left: 29px; border-radius: 28px; background: #e1e1e1; display: flex; align-items: center; padding: 0 21px 0 26px; font-size: 28px; }
.url { margin-left: 23px; margin-right: auto; }
.url em { font-style: normal; color: #67686b; }
.o-sh { margin: 0 36px; }
.pz { margin-left: 29px; }
.sp { margin-left: 35px; }
.avatar { width: 44px; height: 44px; margin-left: 28px; border-radius: 50%; background: #5c6abc; color: #fff; font-size: 24px; line-height: 42px; text-align: center; }
.dots { margin-left: 39px; }

.bookmarks { height: 64px; flex: none; display: flex; align-items: center; padding: 0 29px 9px; font-size: 24px; }
.bookmarks span { white-space: nowrap; margin-left: 17px; margin-right: 34px; }
.bookmarks .k2 { margin-left: 16px; margin-right: 40px; letter-spacing: -.8px; }
.bookmarks .k3 { margin-left: 21px; margin-right: 32px; letter-spacing: -.1px; }
.bookmarks .k4 { margin-left: 16px; letter-spacing: -.15px; }

.page { flex: 1; min-height: 0; display: flex; border-top: 2px solid #cbcbcb; position: relative; font-family: "Open Sans", sans-serif; }
.side { width: 500px; flex: none; background: #fff; }
.logo { height: 216px; display: flex; align-items: flex-start; padding: 62px 0 0 50px; }
.brand { margin-left: 10px; margin-top: -2px; font: 900 42px/50px "Lato", sans-serif; letter-spacing: 1.400px; color: #000; white-space: nowrap; }
.side nav a { height: 89.600px; display: grid; grid-template-columns: 72px auto; align-items: center; padding-left: 48px; font-size: 28.800px; color: #7f7f7f; white-space: nowrap; position: relative; }
.side nav a svg { margin-top: 10px; }
.side nav a svg.r { margin: 0 0 2px 3px; }
.side nav a svg.sh { margin-bottom: 7px; }
.side nav a.on { color: #1b1b1b; }
.side nav a.on::before { content: ""; position: absolute; left: 0; top: 8px; width: 4px; height: 74px; background: #6b75dd; }
.side nav a.sub { padding-left: 123px; grid-template-columns: 69px auto; font-size: 26px; }
.side nav a.sub i { width: 22px; height: 22px; border-radius: 50%; background: #68cb8e; }
.cyan { color: #5ccbeb; }
.indigo { color: #6372dc; }
.red { color: #e5475f; }
.violet { color: #4b0ba8; }
.coral { color: #ea6b48; }
.green { color: #68cb8e; }
.yellow { color: #fad548; }
.pink { color: #e8a8b6; }
.jade { color: #4fae74; }

main { flex: 1; min-width: 0; position: relative; padding-left: 60px; background: linear-gradient(87deg, #6071dc, #7068dc 50%, #805eda) 0 0 / 100% 730px no-repeat, #f8f9fe; }
.boxes { position: absolute; left: 0; top: 0; }
.boxes path { fill: none; stroke: rgba(255,255,255,.11); stroke-width: 2; }
.hero { position: relative; color: #fff; height: 474px; padding-top: 48px; }
.hero h1 { margin: 0; font-size: 88px; line-height: 100px; font-weight: 300; white-space: pre; }
.hero h1 b { font-weight: 600; color: #e6e6e6; }
.hero p { margin: 32px 0 0; font-size: 32px; line-height: 54.400px; font-weight: 300; white-space: nowrap; }
.tags { display: flex; gap: 16px; margin-top: 32px; }
.tag { height: 57px; width: 320px; border-radius: 29px; background: #f7f9fe; color: #525f7f; font-size: 22.400px; font-weight: 600; display: flex; align-items: center; padding: 0 0 2px 31px; gap: 15px; white-space: nowrap; }
.tag.new { width: 195px; border: 2px dashed #fff; background: none; color: #fff; gap: 17px; padding: 0 0 0 30px; font-weight: 700; }

.cols { position: relative; display: flex; gap: 61px; }
.left { width: 1487px; display: flex; flex-direction: column; gap: 48px; margin-right: -1px; }
.right { width: 713px; display: flex; flex-direction: column; gap: 51px; }
.card { background: #fff; border: 2px solid #f1f1f3; border-radius: 12px; box-shadow: 0 0 60px rgba(136,152,170,.17); }
.card h2 { margin: 0; font-size: 34px; line-height: 44px; font-weight: 600; color: #32325d; white-space: nowrap; }
.card header { height: 134px; display: flex; align-items: center; justify-content: space-between; padding: 0 77px 2px 48px; border-bottom: 2px solid #f1f1f2; }
.right .card header { height: 133px; }
.caret { margin-top: 6px; }
.about { height: 142px; display: flex; align-items: center; justify-content: space-between; padding: 0 49px 2px 48px; }
.about h2 { margin-top: -5px; }
.btn { display: flex; align-items: center; border: 2.500px solid #172b4d; border-radius: 12px; height: 56px; color: #172b4d; font-size: 24px; font-weight: 600; letter-spacing: .6px; white-space: nowrap; padding-bottom: 1px; }
.readme { width: 225px; padding-left: 16px; gap: 14px; }
.steps { height: 800px; }
.timeline { position: relative; padding: 46px 0 0 47px; }
.timeline::before { content: ""; position: absolute; left: 76px; top: 48px; width: 4px; height: 640px; background: repeating-linear-gradient(#e6e8ec 0 12px, transparent 12px 16px); }
article { position: relative; display: flex; height: 324px; }
.pin { width: 66px; height: 66px; border-radius: 50%; background: rgba(204,240,221,.9); display: flex; align-items: center; justify-content: center; }
.txt { margin-left: 55px; }
.txt h3 { margin: 7px 0 0; font-size: 30px; line-height: 42px; font-weight: 600; color: #32325d; }
.txt p { margin: 9px 0 0; font-size: 28px; line-height: 47.600px; font-weight: 300; color: #525f7f; white-space: nowrap; }
.pill { margin-top: 32px; width: 399px; height: 63px; border-radius: 32px; background: #d2f2e0; color: #4fae74; font-size: 22.400px; font-weight: 600; display: flex; align-items: center; padding-left: 30px; gap: 20px; white-space: nowrap; }
.share { height: 378px; display: flex; flex-direction: column; }
.share .priv { margin: 44px 0 0; font-size: 28px; line-height: 48px; text-align: center; color: #525f7f; }
.public { width: 369px; margin: 45px auto 0 170px; padding-left: 15px; gap: 23px; }
.sum { height: 600px; }
.stat { display: flex; padding: 47px 0 0 48px; height: 195px; }
.stat i { width: 96px; height: 96px; border-radius: 50%; background: #68cb8e; display: flex; align-items: center; justify-content: center; box-shadow: 0 0 60px rgba(136,152,170,.15); }
.stat .crimson { background: #e1495f; }
.stat div { margin-left: 60px; }
.stat small { display: block; margin-top: -1px; font-size: 26px; line-height: 40px; font-weight: 600; color: #8898aa; white-space: nowrap; }
.stat strong { display: block; font-size: 40px; line-height: 54px; margin-top: 3px; font-weight: 600; color: #32325d; white-space: nowrap; }
.wizard { position: absolute; right: 20px; top: 1290px; width: 493px; height: 86px; border-radius: 10px; background: #e96d4a; color: #fff; font-size: 28px; font-weight: 600; letter-spacing: .7px; display: flex; align-items: center; padding-left: 42px; gap: 24px; white-space: nowrap; box-shadow: 0 8px 16px rgba(50,50,93,.18); }
.fade { position: absolute; left: 0; right: 0; bottom: 0; height: 80px; background: linear-gradient(transparent, rgba(0,0,0,.12)); -webkit-mask: linear-gradient(90deg, transparent, #000 200px, #000 2700px, transparent); mask: linear-gradient(90deg, transparent, #000 200px, #000 2700px, transparent); }

.dock { position: relative; margin: 2px 80px 0; height: 120px; flex: none; border-radius: 36px; border: 2px solid rgba(150,152,165,.6); display: flex; align-items: center; padding: 0 0 10px 16px; gap: 25.050px; background: linear-gradient(90deg, #6c6f7e 0, #686c79 460px, #7a8888 700px, #5f6876 900px, #4e5566 1080px, #77787a 1240px, #7c7371 1400px, #6b6570 1540px, #73696a 1700px, #5e4c42 1880px, #857a74 2080px, #757180 2350px, #75748a 2720px); }
.app { position: relative; width: 72px; height: 72px; flex: none; }
.app svg { width: 72px; height: 72px; overflow: visible; }
.app.run::after { content: ""; position: absolute; left: 31px; top: 89px; width: 8px; height: 8px; border-radius: 50%; background: #f4f5fa; }
.app.dim::after { background: #d3d8e4; }
.badge { position: absolute; left: 49px; top: -10px; width: 34px; height: 34px; border-radius: 50%; background: #e25141; color: #fff; font-size: 21px; font-weight: 400; line-height: 34px; text-align: center; }
.cal b { position: absolute; left: 0; width: 72px; top: 2px; text-align: center; color: #fff; font-size: 15px; line-height: 20px; font-weight: 600; }
.cal span { position: absolute; left: 0; width: 72px; top: 22px; text-align: center; font-size: 44px; line-height: 46px; font-weight: 300; letter-spacing: -2px; }
.tv span { position: absolute; left: 33px; top: 15px; color: #fff; font-size: 32px; line-height: 40px; font-weight: 500; letter-spacing: -1px; }
.off span { position: absolute; left: 6px; top: 22px; width: 28px; line-height: 28px; text-align: center; color: #fff; font-size: 21px; font-weight: 600; }
.zoom { width: 80px; height: 80px; margin: 0 -4px; }
.zoom svg { width: 80px; height: 80px; }
.rb { width: 86px; height: 86px; margin: 0 -7px 0 -6px; }
.rb svg { width: 86px; height: 86px; }
.bar { width: 2px; height: 84px; flex: none; background: #a5a2a8; margin: 0 7px 0 9px; }
.bar.b2 { margin: 0 2px 0 10px; }
.bin { width: 64px; height: 84px; margin-left: 9px; }
.bin svg { width: 64px; height: 84px; }
```
